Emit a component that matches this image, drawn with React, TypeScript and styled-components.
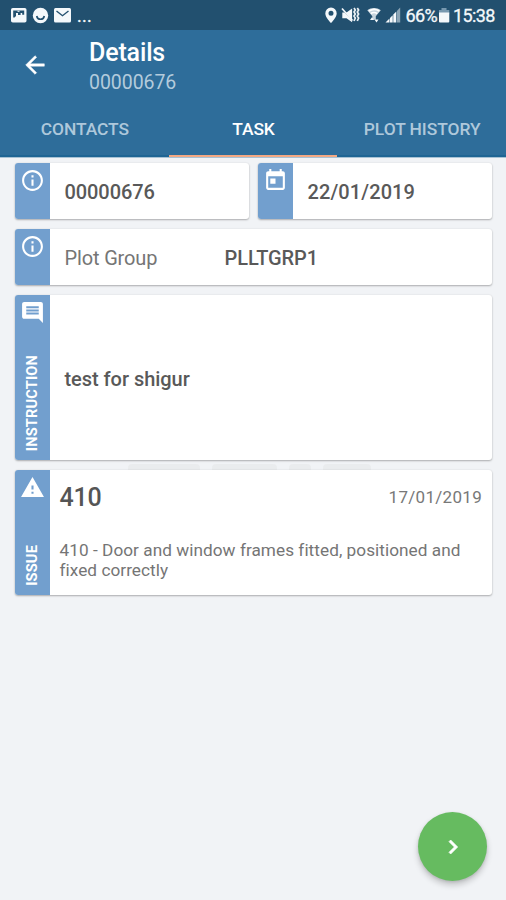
import React from 'react';
import styled, { createGlobalStyle } from 'styled-components';

const GlobalStyle = createGlobalStyle`
  * { box-sizing: border-box; }
  body { margin: 0; background: #f2f4f7; font-family: Roboto, 'Liberation Sans', sans-serif; }
`;

const Screen = styled.div`
  position: relative;
  width: 506px;
  height: 900px;
  overflow: hidden;
  display: flex;
  flex-direction: column;
  background: #f1f3f6;
`;

const StatusBar = styled.div`
  height: 30px;
  padding: 0 11px 0 10px;
  display: flex;
  justify-content: space-between;
  align-items: center;
  background: #22506f;
  color: #f4f8fb;
`;

const StatusGroup = styled.div`
  display: flex;
  align-items: center;
  height: 30px;
  svg { display: block; flex: none; }
`;

const StatusText = styled.span<{ $width: number; $gap?: number }>`
  width: ${p => p.$width}px;
  margin-left: ${p => p.$gap ?? 0}px;
  padding-top: 1px;
  font-size: 18px;
  line-height: 30px;
  letter-spacing: -0.6px;
  white-space: nowrap;
  -webkit-text-stroke: 0.3px currentColor;
`;

const StatusDots = styled.span`
  width: 20px;
  margin-left: 1px;
  padding-top: 1px;
  font-size: 18px;
  line-height: 29px;
  letter-spacing: 0.2px;
  -webkit-text-stroke: 0.3px currentColor;
`;

const AppBar = styled.header`
  height: 128px;
  flex: none;
  display: flex;
  flex-direction: column;
  background: #2e6d9a;
  border-bottom: 1px solid #a9c3d5;
`;

const TitleRow = styled.div`
  height: 70px;
  display: flex;
  align-items: center;
  padding-left: 21px;
`;

const Titles = styled.div`
  margin-left: 40px;
  padding-top: 4px;
`;

const Title = styled.div`
  font-size: 25px;
  font-weight: 500;
  line-height: 30px;
  letter-spacing: -0.15px;
  color: #fff;
`;

const Subtitle = styled.div`
  padding-top: 1px;
  font-size: 19.5px;
  line-height: 27px;
  letter-spacing: -0.05px;
  color: #b3cbdc;
`;

const Tabs = styled.nav`
  display: grid;
  grid-template-columns: repeat(3, 1fr);
  flex: 1;
`;

const Tab = styled.div<{ $active?: boolean }>`
  display: flex;
  justify-content: center;
  padding: 15px 0 0 1px;
  font-size: 17.4px;
  line-height: 28px;
  font-weight: 500;
  white-space: nowrap;
  letter-spacing: -0.05px;
  color: ${p => (p.$active ? '#fff' : '#aec8db')};
  border-bottom: 2px solid ${p => (p.$active ? '#f3a984' : '#1f6594')};
`;

const Content = styled.main`
  display: flex;
  flex-direction: column;
  gap: 10px;
  padding: 5px 14px 0 15px;
`;

const CardRow = styled.div`
  display: grid;
  grid-template-columns: 234px 234px;
  gap: 9px;
`;

const Card = styled.section<{ $height: number }>`
  height: ${p => p.$height}px;
  display: flex;
  background: #fff;
  border-radius: 3px;
  box-shadow: 0 1px 2px rgba(0, 0, 0, 0.28), 0 0 2px rgba(0, 0, 0, 0.08);
`;

/* Worn backdrop mark that shows only in the gap between two cards. */
const BackdropMark = styled.div`
  display: flex;
  gap: 12px;
  height: 6px;
  margin: -6px 0 -10px 113px;
`;

const BackdropPiece = styled.span<{ $width: number }>`
  width: ${p => p.$width}px;
  background: #eaecee;
  border-radius: 4px 4px 0 0;
`;

const Strip = styled.div`
  width: 35px;
  flex: none;
  padding: 5px 0 9px;
  display: flex;
  flex-direction: column;
  align-items: center;
  justify-content: space-between;
  background: #729fce;
  border-radius: 3px 0 0 3px;
  svg { display: block; flex: none; }
`;

const StripLabel = styled.span`
  writing-mode: vertical-rl;
  transform: rotate(180deg);
  font-size: 14.6px;
  line-height: 17px;
  letter-spacing: 0.15px;
  font-weight: 700;
  color: #fff;
`;

const Value = styled.div<{ $spacing?: number }>`
  padding-top: 2px;
  font-size: 20px;
  line-height: 24px;
  font-weight: 500;
  letter-spacing: ${p => p.$spacing ?? -0.08}px;
  color: #595959;
`;

const Field = styled.div`
  display: flex;
  align-items: center;
  padding-left: 14.5px;
`;

const FieldLabel = styled.div`
  width: 160px;
  padding-top: 2px;
  font-size: 20px;
  line-height: 24px;
  letter-spacing: -0.15px;
  color: #757575;
`;

const Issue = styled.div`
  flex: 1;
  padding: 12px 10px 0 9.5px;
`;

const IssueHead = styled.div`
  display: flex;
  justify-content: space-between;
  align-items: center;
  height: 30px;
`;

const IssueCode = styled.div`
  font-size: 25px;
  font-weight: 500;
  letter-spacing: -0.2px;
  color: #555;
`;

const IssueDate = styled.div`
  font-size: 17px;
  letter-spacing: 0.3px;
  color: #787878;
`;

const IssueText = styled.p`
  margin: 27.5px 0 0;
  font-size: 17.2px;
  line-height: 20px;
  letter-spacing: 0.05px;
  white-space: nowrap;
  color: #757575;
`;

const Fab = styled.button`
  position: absolute;
  right: 19px;
  bottom: 19px;
  width: 69px;
  height: 69px;
  padding: 0;
  border: 0;
  border-radius: 50%;
  display: flex;
  align-items: center;
  justify-content: center;
  background: #66bb60;
  box-shadow: 0 4px 6px rgba(0, 0, 0, 0.2), 0 1px 3px rgba(0, 0, 0, 0.1);
`;

const Glyph = ({ d, size = 25, stroke = 0 }: { d: string; size?: number; stroke?: number }) => (
  <svg width={size} height={size} viewBox="0 0 24 24" fill="#fff" stroke="#fff" strokeWidth={stroke}><path d={d} /></svg>
);

const INFO = 'M11 7h2v2h-2zm0 4h2v6h-2zm1-9C6.48 2 2 6.48 2 12s4.48 10 10 10 10-4.48 10-10S17.52 2 12 2zm0 18c-4.41 0-8-3.59-8-8s3.59-8 8-8 8 3.59 8 8-3.59 8-8 8z';
const TODAY = 'M19 3h-1V1h-2v2H8V1H6v2H5c-1.1 0-2 .9-2 2v14c0 1.1.9 2 2 2h14c1.1 0 2-.9 2-2V5c0-1.1-.9-2-2-2zm0 16H5V8h14v11zM7 10h5v5H7z';
const COMMENT = 'M21.99 4c0-1.1-.89-2-1.99-2H4c-1.1 0-2 .9-2 2v12c0 1.1.9 2 2 2h14l4 4-.01-18zM18 14H6v-2h12v2zm0-3H6V9h12v2zm0-3H6V6h12v2z';
const WARNING = 'M1 21h22L12 2 1 21zm12-3h-2v-2h2v2zm0-4h-2v-4h2v4z';
const BACK = 'M20 11H7.83l5.59-5.59L12 4l-8 8 8 8 1.41-1.41L7.83 13H20v-2z';
const CHEVRON = 'M10 6L8.59 7.41 13.17 12l-4.58 4.59L10 18l6-6z';

const Notifications = () => (
  <svg width="66" height="20" viewBox="0 0 66 20">
    <rect x="1" y="3" width="15.5" height="14.5" rx="1.8" fill="#f4f8fb" />
    <path d="M3.2 12.5V5.5h11v4.2h-2V8h-1.6v2H8V8H6v3l-1.5 1.5z" fill="#22506f" />
    <path d="M7.5 6.3h2" stroke="#f4f8fb" strokeWidth="1" />
    <circle cx="30.5" cy="10.5" r="7.7" fill="#f4f8fb" />
    <path d="M26.7 11c.8 4.3 6.8 4.3 7.6 0" fill="none" stroke="#22506f" strokeWidth="1.6" />
    <rect x="44" y="3" width="17" height="14.5" rx="1.5" fill="#f4f8fb" />
    <path d="M46.5 6l6 4.7 6-4.7" fill="none" stroke="#22506f" strokeWidth="1.4" />
  </svg>
);

const Indicators = () => (
  <svg width="78" height="20" viewBox="0 0 78 20" fill="#f4f8fb">
    <path fillRule="evenodd" d="M6 2.6a5.7 5.7 0 0 0-5.7 5.8C.3 12.3 6 18 6 18s5.7-5.7 5.7-9.6A5.7 5.7 0 0 0 6 2.6zM6 5.8a2.5 2.5 0 1 1 0 5 2.5 2.5 0 0 1 0-5z" />
    <path d="M17.3 7.5h4.2l5.6-4v13.7l-5.6-4h-4.2z" />
    <path d="M17.6 5l9.7 10.5" stroke="#22506f" strokeWidth="0.9" />
    <path d="M17 3.5l10.5 12" stroke="#f4f8fb" strokeWidth="1.6" />
    <path d="M29 3l1.3 2-1.3 2 1.3 2-1.3 2 1.3 2-1.3 3M32.3 3l1.3 2-1.3 2 1.3 2-1.3 2 1.3 2-1.3 3" fill="none" stroke="#eaf1f5" strokeWidth="1.7" />
    <path d="M42.3 5.2c3.8-3 9.7-3 13.5 0l-5 6v3.5h-3.5v-3.5z" fill="#c8d5de" />
    <path d="M43.8 6c3.3-2 7.3-2 10.5 0M45.8 8.5c2-1.2 4.3-1.2 6.5 0" fill="none" stroke="#fff" strokeWidth="1.5" />
    <path d="M45 15l2-2.8 2 2.8zM49.5 14.5h4l-2 3z" />
    <path d="M60.5 17.5l4-4v4zM65 17.5V13l2.7-2.7v7.2z" />
    <path d="M68.3 17.5v-8l3-3v11z" />
    <path d="M72 17.5V5.7l3.2-3.1v14.9z" fill="#8ca5b6" />
  </svg>
);

const Battery = () => (
  <svg width="12" height="20" viewBox="0 0 12 20">
    <path d="M3.5 3h5v2h2.8v3.5H1V5h2.5z" fill="#7899b0" />
    <path d="M1 7.5h10.3v9a1 1 0 0 1-1 1H2a1 1 0 0 1-1-1z" fill="#f4f8fb" />
  </svg>
);

export default function App() {
  return (
    <>
      <GlobalStyle />
      <Screen>
        <StatusBar>
          <StatusGroup>
            <Notifications />
            <StatusDots>...</StatusDots>
          </StatusGroup>
          <StatusGroup>
            <Indicators />
            <StatusText $width={32} $gap={3}>66%</StatusText>
            <Battery />
            <StatusText $width={42} $gap={3.5}>15:38</StatusText>
          </StatusGroup>
        </StatusBar>
        <AppBar>
          <TitleRow>
            <Glyph d={BACK} size={28} stroke={0.4} />
            <Titles>
              <Title>Details</Title>
              <Subtitle>00000676</Subtitle>
            </Titles>
          </TitleRow>
          <Tabs>
            <Tab>CONTACTS</Tab>
            <Tab $active>TASK</Tab>
            <Tab>PLOT HISTORY</Tab>
          </Tabs>
        </AppBar>
        <Content>
          <CardRow>
            <Card $height={56}>
              <Strip><Glyph d={INFO} /></Strip>
              <Field><Value>00000676</Value></Field>
            </Card>
            <Card $height={56}>
              <Strip><Glyph d={TODAY} /></Strip>
              <Field><Value $spacing={0.1}>22/01/2019</Value></Field>
            </Card>
          </CardRow>
          <Card $height={56}>
            <Strip><Glyph d={INFO} /></Strip>
            <Field>
              <FieldLabel>Plot Group</FieldLabel>
              <Value>PLLTGRP1</Value>
            </Field>
          </Card>
          <Card $height={165}>
            <Strip><Glyph d={COMMENT} /><StripLabel>INSTRUCTION</StripLabel></Strip>
            <Field><Value $spacing={-0.04}>test for shigur</Value></Field>
          </Card>
          <BackdropMark>
            <BackdropPiece $width={72} />
            <BackdropPiece $width={65} />
            <BackdropPiece $width={22} />
            <BackdropPiece $width={48} />
          </BackdropMark>
          <Card $height={125}>
            <Strip><Glyph d={WARNING} /><StripLabel>ISSUE</StripLabel></Strip>
            <Issue>
              <IssueHead>
                <IssueCode>410</IssueCode>
                <IssueDate>17/01/2019</IssueDate>
              </IssueHead>
              <IssueText>
                410 - Door and window frames fitted, positioned and<br />fixed correctly
              </IssueText>
            </Issue>
          </Card>
        </Content>
        <Fab aria-label="Next"><Glyph d={CHEVRON} size={28} stroke={0.6} /></Fab>
      </Screen>
    </>
  );
}
